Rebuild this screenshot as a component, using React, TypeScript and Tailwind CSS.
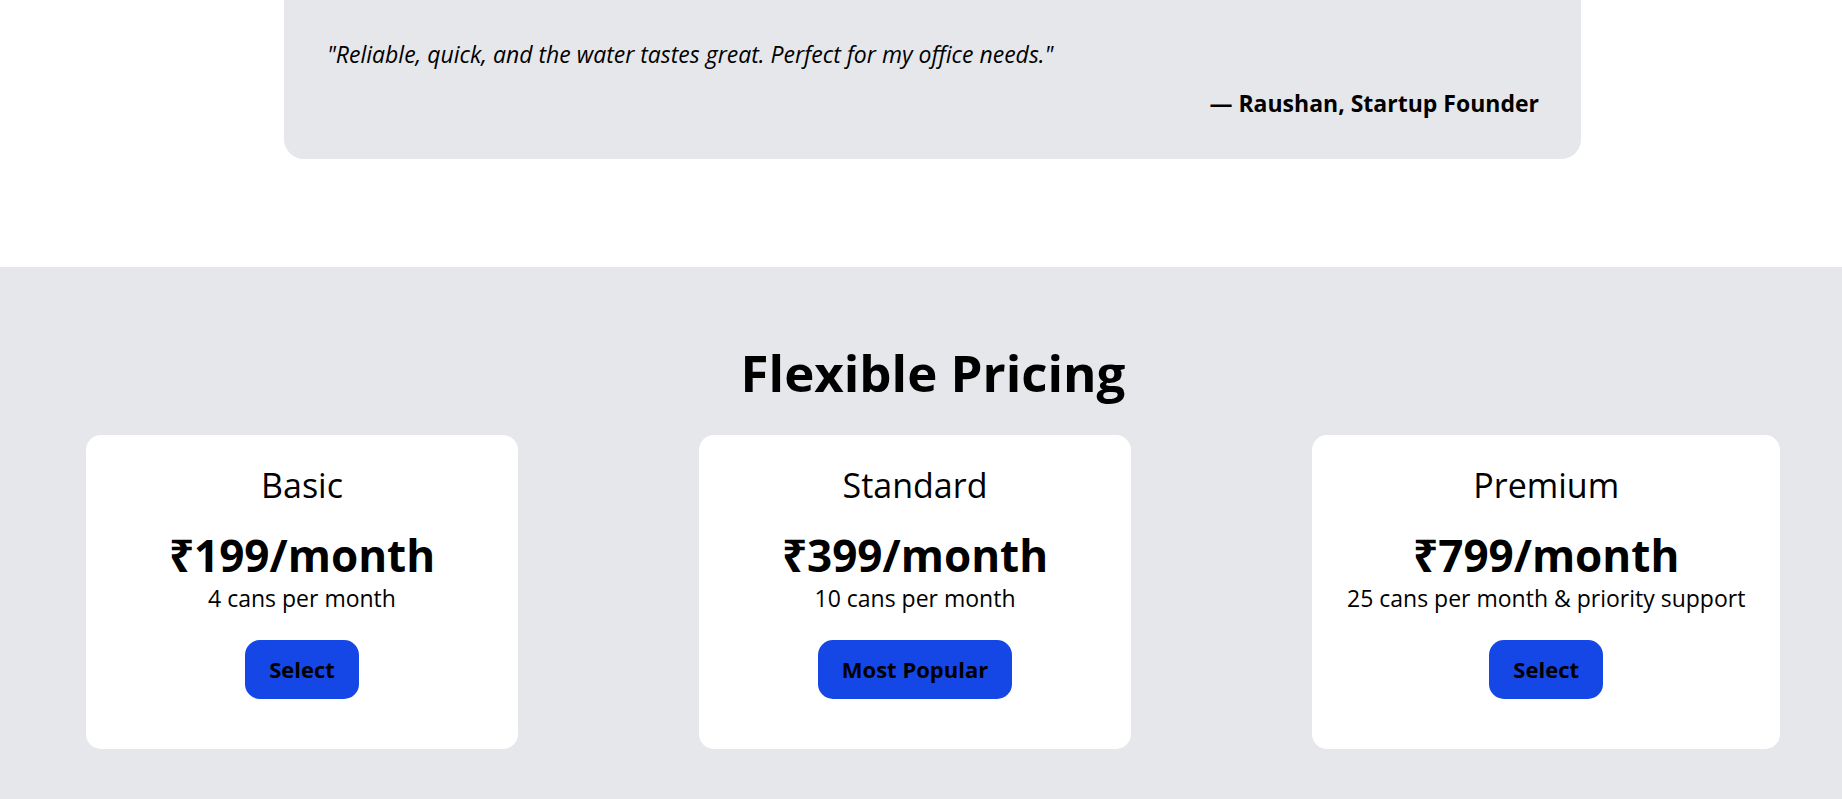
import React from "react";

// Pricing plans
const plans = [
  { name: "Basic", price: "₹199/month", desc: "4 cans per month", cta: "Select" },
  { name: "Standard", price: "₹399/month", desc: "10 cans per month", cta: "Most Popular" },
  { name: "Premium", price: "₹799/month", desc: "25 cans per month & priority support", cta: "Select" },
];

const App = () => {
  return (
    <main
      className="min-h-[799px] bg-white text-black overflow-hidden"
      style={{ fontFamily: '"Open Sans", "Noto Sans", sans-serif' }}
    >
      {/* Testimonial */}
      <section className="pl-[284px] pr-[261px] pb-[108px]">
        <div className="-mt-[24px] rounded-[20px] bg-[#e5e7eb] pt-[61px] pb-[40px] pl-[43px] pr-[42px]">
          <p className="text-[23px] leading-[34px] italic">
            "Reliable, quick, and the water tastes great. Perfect for my office needs."
          </p>
          <p className="mt-[16px] text-right text-[23px] leading-[32px] font-bold">
            — Raushan, Startup Founder
          </p>
        </div>
      </section>

      {/* Pricing */}
      <section className="bg-[#e5e7eb] pt-[77px] pb-[60px]">
        <h2 className="pl-[24px] text-center text-[51px] leading-[57px] font-bold">Flexible Pricing</h2>
        <div className="mt-[34px] flex items-start gap-[181px] pl-[86px]">
          {plans.map((plan, i) => (
            <div
              key={i}
              className="min-w-[432px] rounded-[15px] bg-white px-[35px] pt-[30px] pb-[50px] flex flex-col items-center text-center"
            >
              <h3 className="text-[34px] leading-[40px]">{plan.name}</h3>
              <p className="mt-[26px] text-[44px] leading-[48px] font-bold">{plan.price}</p>
              <p className="mt-[4px] text-[23px] leading-[31px]">{plan.desc}</p>
              <button className="mt-[26px] rounded-[15px] bg-blue-700 px-6 py-4 text-[22px] leading-[27px] font-bold text-black">
                {plan.cta}
              </button>
            </div>
          ))}
        </div>
      </section>
    </main>
  );
};

export default App;
